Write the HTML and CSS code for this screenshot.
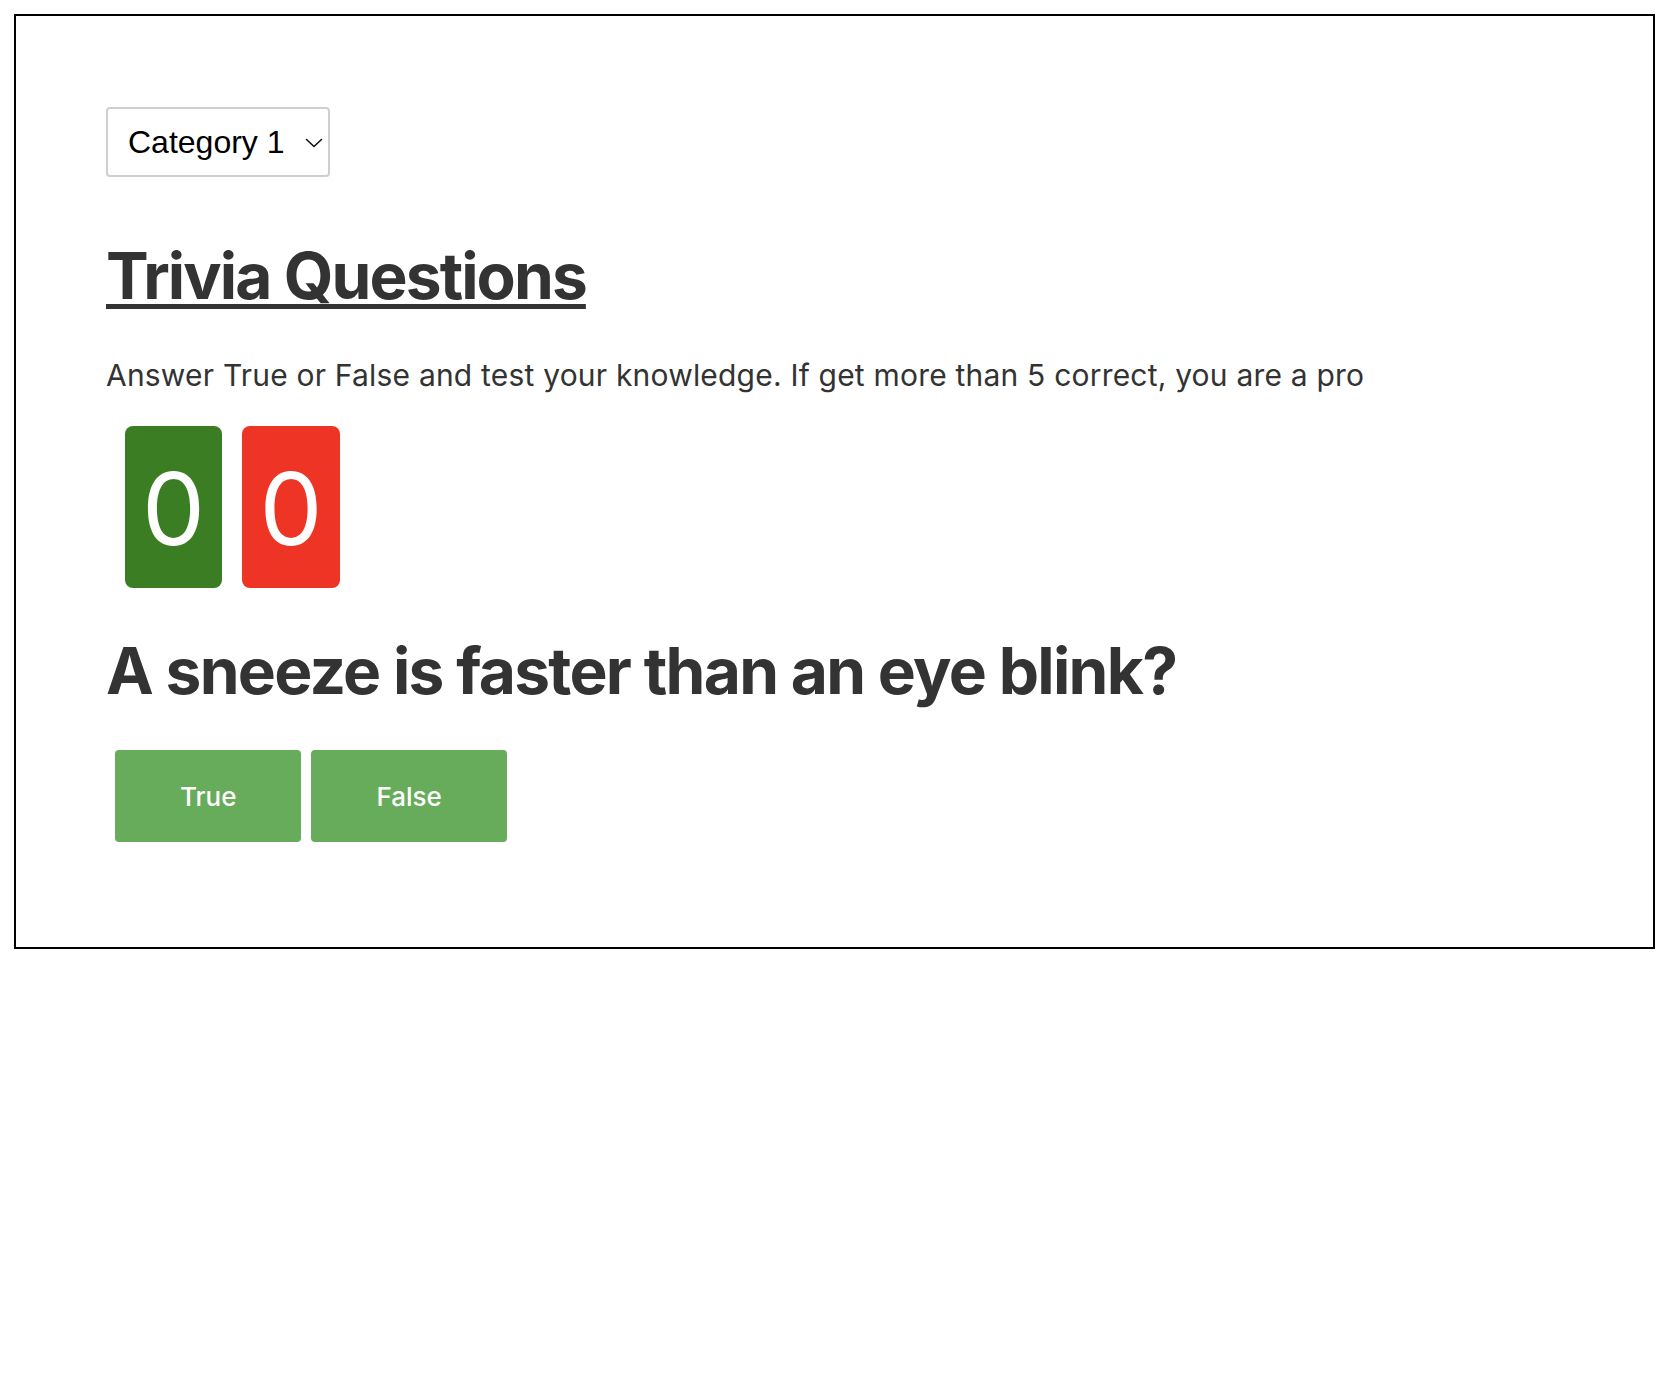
FILE: index.html
```html
<!DOCTYPE html>
<html lang="en">
<head>
<meta charset="utf-8">
<title>Trivia Questions</title>
<link rel="stylesheet" href="styles.css">
</head>
<body>
<div class="frame">
  <div class="select-wrap">
    <select class="category">
      <option>Category 1</option>
      <option>Category 2</option>
    </select>
    <svg class="chevron" width="18" height="10" viewBox="0 0 18 10" aria-hidden="true"><polyline points="1.5,1.5 9,8.5 16.5,1.5" fill="none" stroke="#111" stroke-width="1.6" stroke-linecap="round" stroke-linejoin="round"/></svg>
  </div>
  <h1 class="title">Trivia Questions</h1>
  <p class="intro">Answer True or False and test your knowledge. If get more than 5 correct, you are a pro</p>
  <div class="scores">
    <div class="score score-right">0</div>
    <div class="score score-wrong">0</div>
  </div>
  <h2 class="question">A sneeze is faster than an eye blink?</h2>
  <div class="answers">
    <button class="answer">True</button>
    <button class="answer">False</button>
  </div>
</div>
</body>
</html>
```
FILE: styles.css
```css
html, body {
  margin: 0;
  background: #fff;
}

body {
  padding: 14px 17px 0 14px;
  font-family: Inter, "Noto Sans", sans-serif;
  color: #333;
}

.frame {
  border: 2px solid #000;
  padding: 91px 90px 105px 90px;
  display: flex;
  flex-direction: column;
  align-items: flex-start;
}

.select-wrap {
  position: relative;
  width: 224px;
  height: 70px;
}

.category {
  appearance: none;
  -webkit-appearance: none;
  width: 224px;
  height: 70px;
  box-sizing: border-box;
  border: 2px solid #cfcfcf;
  border-radius: 4px;
  background: #fff;
  padding: 0 0 0 20px;
  font-family: "Liberation Sans", Arial, sans-serif;
  font-size: 32px;
  color: #000;
  margin: 0;
}

.chevron {
  position: absolute;
  left: 199px;
  top: 31px;
}

.title {
  margin: 61px 0 0 0;
  font-size: 64px;
  line-height: 76.8px;
  font-weight: 700;
  color: #333;
  text-decoration: underline;
  text-decoration-thickness: 5px;
  text-underline-offset: 5px;
  letter-spacing: -1.9px;
}

.intro {
  margin: 43px 0 0 0;
  font-size: 30px;
  line-height: 34.8px;
  color: #333;
  letter-spacing: 0.2px;
}

.scores {
  margin: 33px 0 0 19px;
  display: flex;
  gap: 20px;
}

.score {
  width: 97px;
  height: 162px;
  box-sizing: border-box;
  padding-top: 23px;
  border-radius: 8px;
  color: #fff;
  font-size: 100px;
  line-height: 120px;
  text-align: center;
}

.score-right {
  background: #3a7d23;
}

.score-wrong {
  width: 98px;
  background: #ee3424;
}

.question {
  margin: 45px 0 0 0;
  font-size: 64px;
  line-height: 76.8px;
  font-weight: 700;
  color: #333;
  letter-spacing: -1.7px;
}

.answers {
  margin: 41px 0 0 9px;
  display: flex;
  gap: 10px;
}

.answer {
  height: 92px;
  padding: 0 65px;
  border: none;
  border-radius: 4px;
  background: #67ac5b;
  color: #fff;
  font-family: Inter, "Noto Sans", sans-serif;
  font-size: 26px;
  font-weight: 500;
}
```
